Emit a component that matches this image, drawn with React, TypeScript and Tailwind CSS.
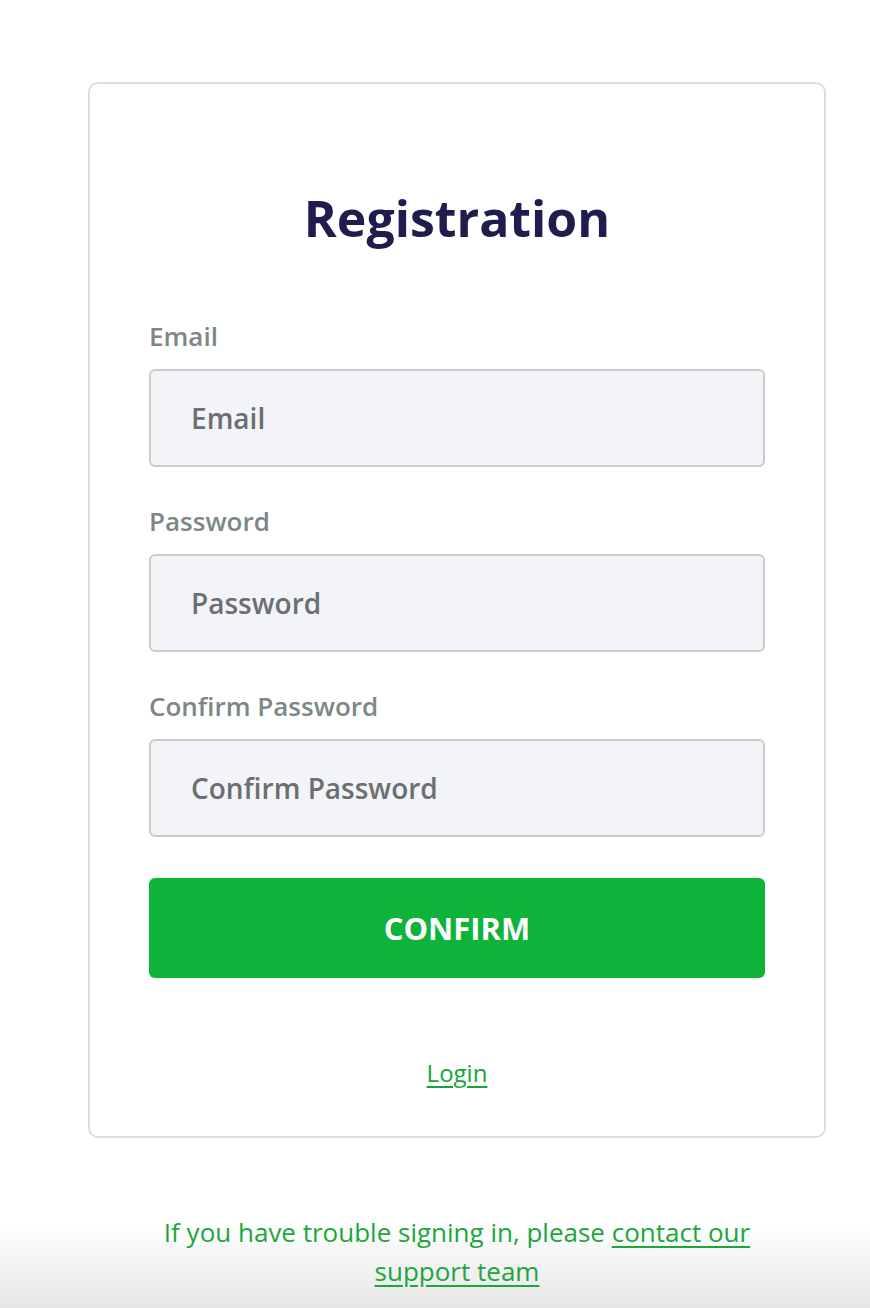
import React from "react";

const font = { fontFamily: '"Open Sans", "Noto Sans", sans-serif' };

function Field({ label, type }: { label: string; type: string }) {
  return (
    <div className="flex flex-col">
      <label className="text-[26px] leading-[32px] font-semibold text-[#7b8886]">{label}</label>
      <input
        type={type}
        placeholder={label}
        className="mt-[17px] h-[98px] w-full rounded-[6px] border-2 border-[#cbcbcb] bg-[#f3f4f8] px-[40px] text-[28px] font-semibold text-[#333] outline-none placeholder:text-[#6c6f71]"
      />
    </div>
  );
}

export default function App() {
  return (
    <div
      style={font}
      className="min-h-[1308px] w-[870px] bg-[linear-gradient(to_bottom,#ffffff_0%,#ffffff_93.5%,#e6e6e6_100%)] pt-[82px]"
    >
      <div className="ml-[88px] w-[738px] rounded-[10px] border-2 border-[#dedede] bg-white px-[59px] pt-[102px] pb-[47px]">
        <h1 className="text-center text-[50px] leading-[64px] font-bold text-[#1f1d4e]">Registration</h1>
        <div className="mt-[70px] flex flex-col gap-[38px]">
          <Field label="Email" type="email" />
          <Field label="Password" type="password" />
          <Field label="Confirm Password" type="password" />
        </div>
        <button className="mt-[41px] flex h-[100px] w-full items-center justify-center rounded-[6px] bg-[#0eb33a] text-[31px] font-bold text-white">
          CONFIRM
        </button>
        <div className="mt-[79px] text-center">
          <a href="#" className="text-[24px] leading-[32px] text-[#17a43c] underline underline-offset-[4px]">
            Login
          </a>
        </div>
      </div>
      <div className="ml-[88px] mt-[75px] flex w-[738px] flex-col items-center text-[26px] leading-[39px] text-[#1ca63c]">
        <p className="text-center">
          If you have trouble signing in, please{" "}
          <a href="#" className="underline underline-offset-[4px]">
            contact our
          </a>
        </p>
        <a href="#" className="text-center underline underline-offset-[4px]">
          support team
        </a>
      </div>
    </div>
  );
}
